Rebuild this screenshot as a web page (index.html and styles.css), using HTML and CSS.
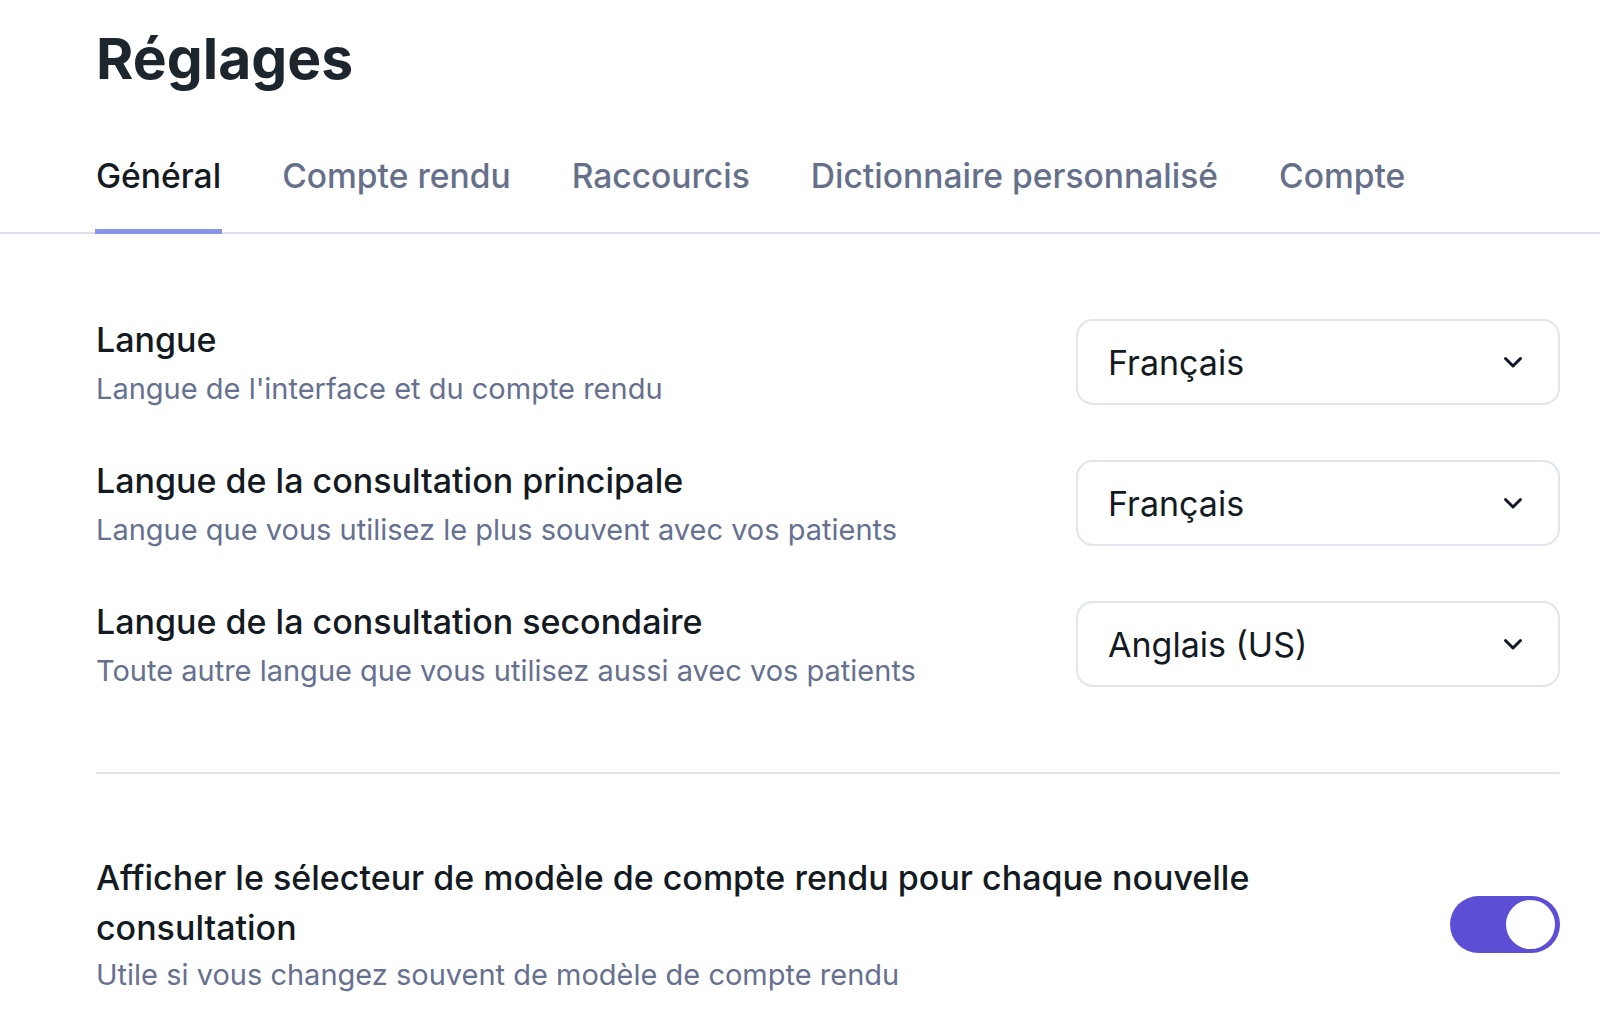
FILE: index.html
```html
<!DOCTYPE html>
<html lang="fr">
<head>
<meta charset="utf-8">
<title>Réglages</title>
<link rel="stylesheet" href="styles.css">
</head>
<body>
<div class="page">
  <header class="header">
    <h1 class="title">Réglages</h1>
  </header>
  <nav class="tabs">
    <a class="tab tab-active">Général</a>
    <a class="tab">Compte rendu</a>
    <a class="tab">Raccourcis</a>
    <a class="tab">Dictionnaire personnalisé</a>
    <a class="tab">Compte</a>
  </nav>
  <main class="content">
    <section class="group">
      <div class="row">
        <div class="text">
          <div class="label">Langue</div>
          <div class="desc">Langue de l'interface et du compte rendu</div>
        </div>
        <div class="select">
          <span class="select-value">Français</span>
          <svg class="chevron" viewBox="0 0 24 24" width="24" height="24"><path d="M4.5 8.5l7.5 7.5 7.5-7.5" fill="none" stroke="#111827" stroke-width="3" stroke-linecap="round" stroke-linejoin="round"/></svg>
        </div>
      </div>
      <div class="row">
        <div class="text">
          <div class="label">Langue de la consultation principale</div>
          <div class="desc">Langue que vous utilisez le plus souvent avec vos patients</div>
        </div>
        <div class="select">
          <span class="select-value">Français</span>
          <svg class="chevron" viewBox="0 0 24 24" width="24" height="24"><path d="M4.5 8.5l7.5 7.5 7.5-7.5" fill="none" stroke="#111827" stroke-width="3" stroke-linecap="round" stroke-linejoin="round"/></svg>
        </div>
      </div>
      <div class="row">
        <div class="text">
          <div class="label">Langue de la consultation secondaire</div>
          <div class="desc">Toute autre langue que vous utilisez aussi avec vos patients</div>
        </div>
        <div class="select">
          <span class="select-value">Anglais (US)</span>
          <svg class="chevron" viewBox="0 0 24 24" width="24" height="24"><path d="M4.5 8.5l7.5 7.5 7.5-7.5" fill="none" stroke="#111827" stroke-width="3" stroke-linecap="round" stroke-linejoin="round"/></svg>
        </div>
      </div>
    </section>
    <hr class="divider">
    <section class="toggle-row">
      <div class="text toggle-text">
        <div class="label label-wrap">Afficher le sélecteur de modèle de compte rendu pour chaque nouvelle consultation</div>
        <div class="desc">Utile si vous changez souvent de modèle de compte rendu</div>
      </div>
      <div class="switch"><span class="knob"></span></div>
    </section>
  </main>
</div>
</body>
</html>
```

FILE: styles.css
```css
html, body {
  margin: 0;
  padding: 0;
  background: #ffffff;
}

body {
  font-family: Inter, "Noto Sans", "Liberation Sans", sans-serif;
  color: #141a22;
  -webkit-font-smoothing: antialiased;
}

.page {
  width: 1600px;
  height: 1029px;
  overflow: hidden;
}

.header {
  padding: 25px 40px 0 96px;
}

.title {
  margin: 0;
  font-size: 57px;
  font-weight: 700;
  line-height: 68px;
  color: #1d252d;
}

.tabs {
  display: flex;
  gap: 59px;
  padding: 0 40px 0 95px;
  margin-top: 63px;
  border-bottom: 2px solid #dfe1ea;
}

.tab {
  font-size: 33.6px;
  font-weight: 500;
  color: #66708a;
  line-height: 40px;
  padding: 0 1px 33px 1px;
  margin-bottom: -2px;
  border-bottom: 5px solid transparent;
}

.tab-active {
  color: #141a22;
  border-bottom-color: #8b93e6;
}

.content {
  padding: 85px 40px 0 96px;
}

.group {
  display: flex;
  flex-direction: column;
  gap: 50px;
}

.row {
  display: flex;
  align-items: center;
  justify-content: space-between;
}

.label {
  font-size: 34px;
  font-weight: 500;
  line-height: 40px;
  color: #141a22;
}

.desc {
  font-size: 29px;
  font-weight: 400;
  line-height: 40px;
  margin-top: 9px;
  color: #66708f;
}

.select {
  width: 484px;
  height: 86px;
  margin-bottom: 5px;
  box-sizing: border-box;
  border: 2px solid #e2e5ee;
  border-radius: 17px;
  display: flex;
  align-items: center;
  justify-content: space-between;
  padding: 0 33px 0 30px;
}

.select-value {
  font-size: 34px;
  font-weight: 400;
  color: #141a22;
}

.chevron {
  display: block;
}

.divider {
  border: 0;
  border-top: 2px solid #e1e3ec;
  margin: 80px 0 0 0;
}

.toggle-row {
  display: flex;
  align-items: center;
  justify-content: space-between;
  margin-top: 79px;
}

.toggle-text {
  width: 1200px;
}

.label-wrap {
  line-height: 50px;
}

.toggle-text .desc {
  margin-top: 2px;
}

.switch {
  width: 110px;
  height: 57px;
  border-radius: 29px;
  background: #5d4fd5;
  box-sizing: border-box;
  padding: 4px 5px 4px 4px;
  display: flex;
  justify-content: flex-end;
}

.knob {
  width: 49px;
  height: 49px;
  border-radius: 50%;
  background: #ffffff;
}
```
